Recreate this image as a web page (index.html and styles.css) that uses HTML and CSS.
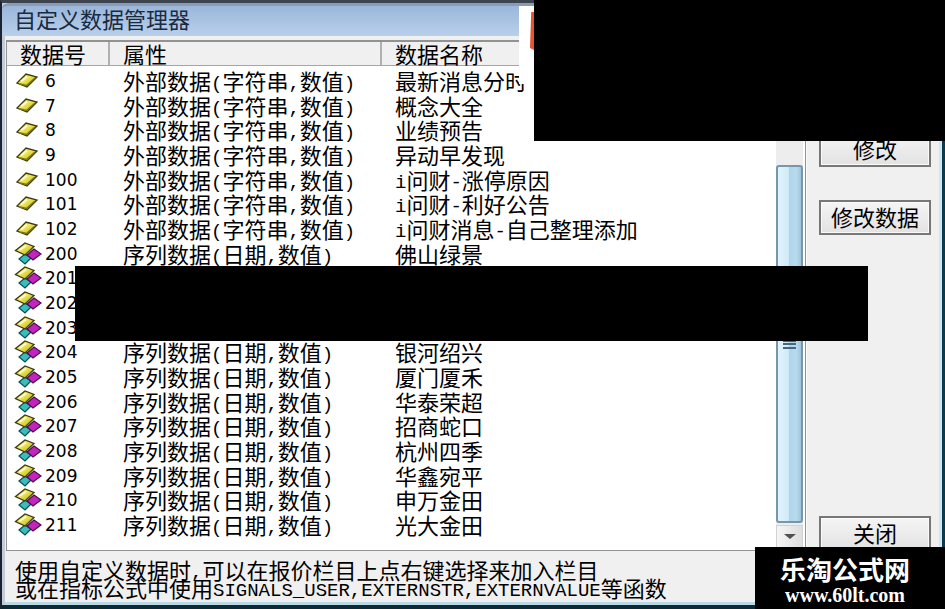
FILE: index.html
```html
<!DOCTYPE html>
<html lang="zh-CN">
<head>
    <meta charset="UTF-8">
    <meta name="viewport" content="width=device-width, initial-scale=1.0">
    <title>自定义数据管理器</title>
    <link rel="stylesheet" href="styles.css">
</head>
<body>
    <!-- 图标 -->
    <svg class="sprite" aria-hidden="true">
        <defs>
            <linearGradient id="gold" x1="0" y1="0" x2="1" y2="1">
                <stop offset="0" stop-color="#a8a020"/>
                <stop offset="0.4" stop-color="#f0e860"/>
                <stop offset="1" stop-color="#b4a800"/>
            </linearGradient>
        </defs>
        <symbol id="icon-single" viewBox="0 0 28 24">
            <path d="M3 14 L12 5 L23 8 L13 18 Z" fill="url(#gold)" stroke="#3c3a10" stroke-width="1.3"/>
            <path d="M7 12.500 L13 7.500" stroke="#fffbd0" stroke-width="2"/>
            <path d="M6 15 L12.500 16.500 L21 9" fill="none" stroke="#7a7408" stroke-width="1.5"/>
        </symbol>
        <symbol id="icon-multi" viewBox="0 0 28 24">
            <path d="M5 17 L11 12 L17 16 L11 22 Z" fill="#38bcbc" stroke="#0c4e50" stroke-width="1.2"/>
            <path d="M13 13 L20 7 L27 12 L19 18 Z" fill="#c424bd" stroke="#4a1048" stroke-width="1.2"/>
            <path d="M1.500 8.500 L11 1 L20 4.500 L11 13 Z" fill="url(#gold)" stroke="#3c3a10" stroke-width="1.3"/>
            <path d="M5.500 8 L12 3.500" stroke="#fffbd0" stroke-width="2"/>
        </symbol>
    </svg>

    <div class="window">
        <div class="title-bar">自定义数据管理器</div>

        <div class="main">
            <!-- 数据列表 -->
            <div class="list">
                <table class="data-table">
                    <thead>
                        <tr><th class="col-id">数据号</th><th class="col-type">属性</th><th>数据名称</th></tr>
                    </thead>
                    <tbody id="rows"></tbody>
                </table>
                <div class="scrollbar">
                    <button class="scroll-button" aria-label="向上"><span class="arrow arrow-up"></span></button>
                    <div class="track"></div>
                    <div class="thumb"><span class="grip"></span></div>
                    <button class="scroll-button" aria-label="向下"><span class="arrow"></span></button>
                </div>
            </div>

            <!-- 操作按钮 -->
            <div class="actions">
                <button class="action">修改</button>
                <button class="action">修改数据</button>
                <button class="action action-close">关闭</button>
            </div>
        </div>

        <div class="note">
            <p>使用自定义数据时<span class="latin">,</span>可以在报价栏目上点右键选择来加入栏目</p>
            <p>或在指标公式中使用<span class="latin">SIGNALS_USER,EXTERNSTR,EXTERNVALUE</span>等函数</p>
        </div>
    </div>

    <!-- 遮挡区域 -->
    <div class="patch"><span class="patch-mark"></span></div>
    <div class="mask mask-top"></div>
    <div class="mask mask-rows"></div>
    <div class="mask watermark">
        <div class="site-name">乐淘公式网</div>
        <div class="site-url">www.60lt.com</div>
    </div>

    <script>
        const external = '外部数据(字符串,数值)';
        const series = '序列数据(日期,数值)';

        const items = [
            [6, external, '最新消息分时'],
            [7, external, '概念大全'],
            [8, external, '业绩预告'],
            [9, external, '异动早发现'],
            [100, external, 'i问财-涨停原因'],
            [101, external, 'i问财-利好公告'],
            [102, external, 'i问财消息-自己整理添加'],
            [200, series, '佛山绿景'],
            [201, '', ''],
            [202, '', ''],
            [203, '', ''],
            [204, series, '银河绍兴'],
            [205, series, '厦门厦禾'],
            [206, series, '华泰荣超'],
            [207, series, '招商蛇口'],
            [208, series, '杭州四季'],
            [209, series, '华鑫宛平'],
            [210, series, '申万金田'],
            [211, series, '光大金田']
        ];

        // 半角字符使用等宽字体
        function halfWidth(text) {
            return text.replace(/[(),i-]/g, '<span class="latin">$&</span>');
        }

        document.getElementById('rows').innerHTML = items.map(([id, type, name]) => {
            const icon = type === external ? 'icon-single' : 'icon-multi';
            return `<tr>
                <td><div class="id-cell"><svg class="icon"><use href="#${icon}"/></svg><span class="number">${id}</span></div></td>
                <td>${halfWidth(type)}</td>
                <td>${halfWidth(name)}</td>
            </tr>`;
        }).join('');
    </script>
</body>
</html>
```
FILE: styles.css
```css
* {
    box-sizing: border-box;
}
body {
    margin: 0;
    position: relative;
    background-color: #0b2a35;
    color: #000;
    font-family: "Noto Sans CJK SC", sans-serif;
    font-size: 22px;
}
button {
    font: inherit;
    color: inherit;
    padding: 0;
}
.sprite {
    position: absolute;
    width: 0;
    height: 0;
}
.window {
    display: flex;
    flex-direction: column;
    min-height: 100vh;
    border-style: solid;
    border-width: 3px 3px 4px 2px;
    border-color: #3c4450 #0d3a48 #0b2a35 #1c2230;
    background-color: #f0f0f0;
    box-shadow: inset 3px 0 #c3cbd8, inset -3px 0 #cfe6f4, inset 0 -3px #b9d9e6;
    padding: 0 3px 4px 4px;
}
.title-bar {
    height: 33px;
    margin: 0 -3px 4px -4px;
    padding-left: 12px;
    border-top: 3px solid #8b9bb4;
    border-radius: 6px 0 0 0;
    background: linear-gradient(#9ab6da, #b9d0ea);
    color: #1a2a40;
    line-height: 24px;
}
.main {
    display: flex;
    flex: 1;
}
.list {
    display: flex;
    flex: 1;
    border: 1px solid #929292;
    border-top-width: 2px;
    background-color: #fff;
    padding-right: 2px;
}
.data-table {
    flex: 1;
    align-self: flex-start;
    border-collapse: separate;
    border-spacing: 0;
    table-layout: fixed;
    width: 100%;
}
th {
    height: 24px;
    padding: 0 0 2px 13px;
    background-color: #f0f0f0;
    border-bottom: 1px solid #a5a5a5;
    border-right: 2px solid #b0b0b0;
    font-weight: normal;
    text-align: left;
    line-height: 20px;
}
.col-id {
    width: 103px;
}
.col-type {
    width: 272px;
}
td {
    height: 25px;
    padding: 0 0 0 13px;
    line-height: 22px;
    vertical-align: middle;
    white-space: nowrap;
}
td:first-child {
    padding-left: 7px;
}
/* 行高在 25 与 24 之间交替 */
tr:nth-child(3n) td {
    height: 24px;
}
tbody tr:first-child td {
    height: 27px;
    padding-top: 2px;
}
.id-cell {
    display: flex;
    align-items: center;
    gap: 3px;
    height: 24px;
}
.icon {
    width: 28px;
    height: 24px;
}
.number {
    font-family: "DejaVu Sans", sans-serif;
    font-size: 17px;
}
.latin {
    font-family: "Liberation Mono", monospace;
    font-size: 19px;
    line-height: 0;
    vertical-align: 1px;
}
td:not(:first-child) {
    padding-bottom: 2px;
}
.scrollbar {
    display: flex;
    flex-direction: column;
    width: 27px;
    padding-bottom: 2px;
    background-color: #ededed;
}
.scroll-button {
    height: 23px;
    border: 1px solid #d2d2d2;
    background: linear-gradient(90deg, #f5f5f5, #dedede);
}
.arrow {
    display: block;
    width: 0;
    margin: 0 auto;
    border: 6px solid transparent;
    border-top: 5px solid #505050;
    border-bottom: 0;
}
.arrow-up {
    transform: rotate(180deg);
}
.track {
    height: 100px;
}
.thumb {
    display: flex;
    flex: 1;
    align-items: center;
    justify-content: center;
    border: 2px solid #7896aa;
    border-radius: 3px;
    background: linear-gradient(90deg, #e0f3fc 0%, #d2ebf8 45%, #b0d5eb 50%, #b8daed 80%, #9fc5dc 100%);
    margin-bottom: 2px;
}
.grip {
    width: 13px;
    height: 9px;
    border-top: 2px solid #47687c;
    border-bottom: 2px solid #47687c;
    background: linear-gradient(transparent 1px, #47687c 1px, #47687c 3px, transparent 3px);
}
.actions {
    display: flex;
    flex-direction: column;
    width: 133px;
    padding: 92px 8px 0 12px;
    gap: 33px;
    border-left: 1px solid #fafafa;
}
.action {
    height: 35px;
    padding-bottom: 4px;
    border: 2px solid #777;
    background: linear-gradient(#f5f5f5, #e2e2e2);
    box-shadow: inset 0 0 0 1px #fafafa;
    line-height: 26px;
}
.action-close {
    margin-top: auto;
}
.note {
    padding: 9px 0 5px 9px;
}
.note p {
    margin: 0;
    height: 18px;
    line-height: 18px;
    white-space: nowrap;
}
.mask {
    position: absolute;
    background-color: #000;
}
.mask-top {
    top: 0;
    left: 534px;
    right: 0;
    height: 141px;
}
.mask-rows {
    top: 266px;
    left: 75px;
    right: 77px;
    height: 75px;
}
.patch {
    position: absolute;
    top: 6px;
    left: 519px;
    width: 15px;
    height: 78px;
    background-color: #fff;
}
.patch-mark {
    display: block;
    width: 4px;
    height: 38px;
    margin: 6px 0 0 auto;
    background-color: #e5532f;
    clip-path: polygon(30% 0, 100% 0, 100% 100%, 0 95%);
}
.watermark {
    right: 0;
    bottom: 0;
    width: 190px;
    height: 62px;
    padding: 8px 10px 0 0;
    color: #fff;
    text-align: center;
}
.site-name {
    font-size: 26px;
    font-weight: bold;
    line-height: 28px;
}
.site-url {
    font-family: "Liberation Serif", serif;
    font-size: 20px;
    font-weight: bold;
    line-height: 24px;
}
```
